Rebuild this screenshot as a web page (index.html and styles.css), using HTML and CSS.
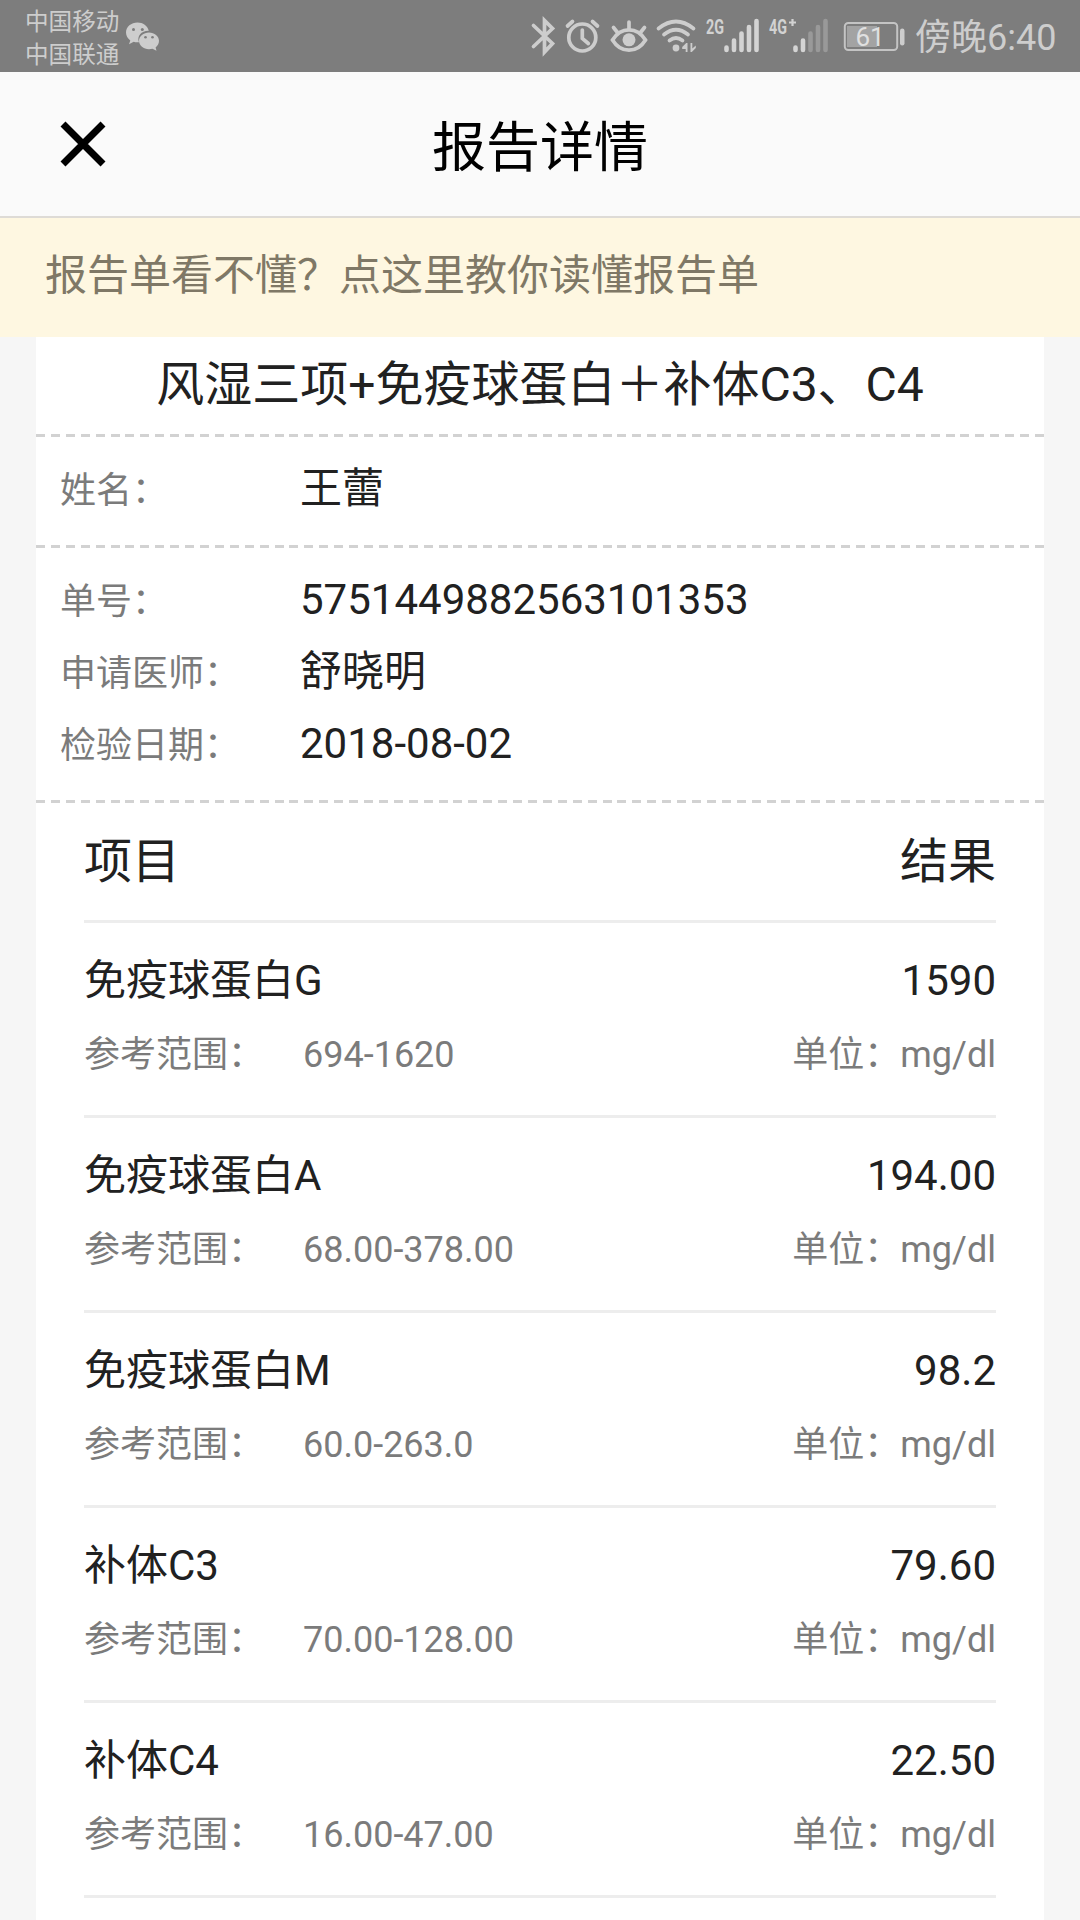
FILE: index.html
```html
<!DOCTYPE html>
<html lang="zh-CN">
<head>
<meta charset="utf-8">
<title>报告详情</title>
<link rel="stylesheet" href="styles.css">
</head>
<body>
<div class="status">
  <div class="carriers"><span>中国移动</span><span>中国联通</span></div>
  <svg class="wechat" width="34" height="30" viewBox="0 0 34 30">
    <path class="fill" d="M11.500 0.500C5.200 .5 0 4.800 0 10.500c0 3.300 1.700 6 4.300 7.900L3 22.200l4.700-2.400c1.600.5 3.500.6 5.300.4C10.500 14 15.500 8.500 22.800 8.700 21.500 3.800 17 .5 11.500.5z"/>
    <path class="fill" d="M33 18.800c0-4.700-4.500-8.400-10-8.400s-10 3.700-10 8.400 4.500 8.500 10 8.500c1.200 0 2.400-.2 3.500-.5l4 1.900-.9-3.300c2.100-1.600 3.400-3.900 3.400-6.600z"/>
    <g class="hole"><circle cx="7.500" cy="7.500" r="1.500"/><circle cx="16.300" cy="7.500" r="1.500"/><circle cx="19.500" cy="15.300" r="1.300"/><circle cx="26.500" cy="15.300" r="1.300"/></g>
  </svg>
  <svg class="icons" width="320" height="72" viewBox="510 0 320 72">
    <g class="line">
      <path d="M533.500 25.500l19 18-8 8.500V20.500l8 8-19 18"/>
      <circle cx="582.300" cy="37.500" r="13.500"/>
      <path d="M582.300 30v8.500l6 5M567.500 26l5-4.500M597.500 26l-5-4.500"/>
      <path d="M612.500 40c4-6.500 10-10.200 16.500-10.200S641.500 33.500 645.500 40c-4 6.500-10 10.200-16.500 10.200S616.500 46.500 612.500 40z"/>
      <path d="M629 22v7M613.500 27.500l4 5M644.500 27.500l-4 5"/>
      <path d="M658.500 28.500q17.500-14 35 0M664 34.500q12-9.500 24 0M669.500 40.500q6.500-5 13 0"/>
    </g>
    <g class="fill">
      <circle cx="629" cy="39.800" r="6.500"/>
      <circle cx="676" cy="48" r="3.400"/>
      <path d="M687.500 43v9h-1.800v-3h-3.500v-2l4-4zM690.500 43h1.800v5.500l3.500-3v2.500l-4 4h-1.300z"/>
    </g>
    <g class="bars"><path d="M726.500 47.500v2.500M734 40.500V50M741.500 33.500V50M749 27V50M756.500 21V50"/><path d="M795.500 47.500v2.500M803 40.500V50"/></g>
    <g class="bars dim"><path d="M810.500 33.500V50M818 27V50M825.500 21V50"/></g>
    <text class="net" x="706" y="34" textLength="18" lengthAdjust="spacingAndGlyphs">2G</text>
    <text class="net" x="769" y="34" textLength="18" lengthAdjust="spacingAndGlyphs">4G</text>
    <path class="plus" d="M792.500 19v7M789 22.500h7"/>
  </svg>
  <svg class="battery" width="64" height="72" viewBox="842 0 64 72">
    <rect class="level" x="847" y="26" width="30" height="21"/>
    <rect class="shell" x="844.800" y="23" width="52.400" height="27" rx="3.500"/>
    <rect class="fill" x="900" y="28.500" width="4.500" height="17" rx="2.200"/>
    <text class="pct" x="870" y="45.500" text-anchor="middle">61</text>
  </svg>
  <span class="time">傍晚6:40</span>
</div>
<header class="header">
  <svg class="close" width="48" height="48" viewBox="0 0 48 48"><path d="M4 4l40 40M44 4L4 44"/></svg>
  <h1>报告详情</h1>
</header>
<div class="banner">报告单看不懂？点这里教你读懂报告单</div>
<main class="card">
  <h2 class="title">风湿三项+免疫球蛋白＋补体C3、C4</h2>
  <section class="info">
    <div class="row"><span class="label">姓名：</span><span class="value">王蕾</span></div>
  </section>
  <section class="info">
    <div class="row"><span class="label">单号：</span><span class="value">5751449882563101353</span></div>
    <div class="row"><span class="label">申请医师：</span><span class="value">舒晓明</span></div>
    <div class="row"><span class="label">检验日期：</span><span class="value">2018-08-02</span></div>
  </section>
  <section class="results">
    <div class="head"><span>项目</span><span>结果</span></div>
    <div class="item">
      <div class="main"><span>免疫球蛋白G</span><span>1590</span></div>
      <div class="sub"><span class="ref">参考范围：</span><span>694-1620</span><span class="unit">单位：mg/dl</span></div>
    </div>
    <div class="item">
      <div class="main"><span>免疫球蛋白A</span><span>194.00</span></div>
      <div class="sub"><span class="ref">参考范围：</span><span>68.00-378.00</span><span class="unit">单位：mg/dl</span></div>
    </div>
    <div class="item">
      <div class="main"><span>免疫球蛋白M</span><span>98.2</span></div>
      <div class="sub"><span class="ref">参考范围：</span><span>60.0-263.0</span><span class="unit">单位：mg/dl</span></div>
    </div>
    <div class="item">
      <div class="main"><span>补体C3</span><span>79.60</span></div>
      <div class="sub"><span class="ref">参考范围：</span><span>70.00-128.00</span><span class="unit">单位：mg/dl</span></div>
    </div>
    <div class="item">
      <div class="main"><span>补体C4</span><span>22.50</span></div>
      <div class="sub"><span class="ref">参考范围：</span><span>16.00-47.00</span><span class="unit">单位：mg/dl</span></div>
    </div>
  </section>
</main>
</body>
</html>
```
FILE: styles.css
```css
* { box-sizing: border-box; }

body {
  margin: 0;
  height: 1920px;
  overflow: hidden;
  display: flex;
  flex-direction: column;
  background: #f6f6f6;
  color: #212121;
  font-family: Roboto, "Noto Sans CJK SC", sans-serif;
}

h1, h2 { margin: 0; font-weight: 400; }

/* Status bar */
.status {
  flex: none;
  height: 72px;
  display: flex;
  align-items: center;
  padding-left: 25px;
  background: #7d7d7d;
  color: #cdcdcd;
}
.carriers {
  display: flex;
  flex-direction: column;
  width: 101px;
  padding-top: 5px;
  font-size: 23.6px;
  line-height: 33px;
}
.wechat { margin-top: 1px; }
.icons { margin-left: 350px; }
.battery { margin-left: 12px; }
.time { margin-left: 9px; font-size: 36px; line-height: 72px; padding-top: 4px; white-space: nowrap; }
.fill { fill: #cdcdcd; }
.hole { fill: #7d7d7d; }
.line { fill: none; stroke: #cdcdcd; stroke-width: 3.700; stroke-linecap: round; }
.bars { stroke: #d4d4d4; stroke-width: 4.600; stroke-linecap: round; }
.dim { stroke: #999; }
.plus { stroke: #d2d2d2; stroke-width: 2.200; }
.net { fill: #d2d2d2; font-size: 21px; font-weight: 700; }
.shell { fill: none; stroke: #c4c4c4; stroke-width: 2; }
.level { fill: #a3a3a3; }
.pct { fill: #e0e0e0; font-size: 26px; }

/* Title bar */
.header {
  flex: none;
  height: 146px;
  display: grid;
  grid-template-columns: 166px 1fr 166px;
  align-items: center;
  background: #fafafa;
  border-bottom: 2px solid #dedbd6;
}
.header h1 {
  padding-top: 9px;
  text-align: center;
  font-size: 54px;
  line-height: 135px;
  color: #000;
}
.close { margin-left: 59px; fill: none; stroke: #000; stroke-width: 7; }

.banner {
  flex: none;
  height: 119px;
  padding-left: 45px;
  background: #fef7e1;
  color: #7f7866;
  font-size: 42px;
  line-height: 115px;
}

/* Report card */
.card {
  flex: 1;
  margin: 0 36px;
  background: #fff;
}
.title, .info {
  padding-bottom: 3px;
  background: repeating-linear-gradient(90deg, #d2d2d2 0 9px, transparent 9px 14.91px) left bottom / 100% 3px no-repeat;
}
.title {
  height: 100px;
  font-size: 48px;
  line-height: 95px;
  text-align: center;
}
.info { padding: 18px 24px 21px; }
.row { height: 72px; font-size: 36px; line-height: 72px; }
.label { display: inline-block; width: 240px; color: #7b7b7b; }
.value { font-size: 42px; line-height: 1; }

.results { padding: 0 48px; }
.head {
  display: flex;
  justify-content: space-between;
  height: 120px;
  border-bottom: 3px solid #ededed;
  font-size: 48px;
  line-height: 117px;
}
.item {
  height: 195px;
  padding: 24px 0;
  border-bottom: 3px solid #ededed;
}
.main {
  display: flex;
  justify-content: space-between;
  font-size: 42px;
  line-height: 68px;
  height: 72px;
}
.sub {
  display: flex;
  font-size: 36px;
  line-height: 72px;
  color: #7b7b7b;
}
.ref { width: 219px; }
.unit { margin-left: auto; }
```
